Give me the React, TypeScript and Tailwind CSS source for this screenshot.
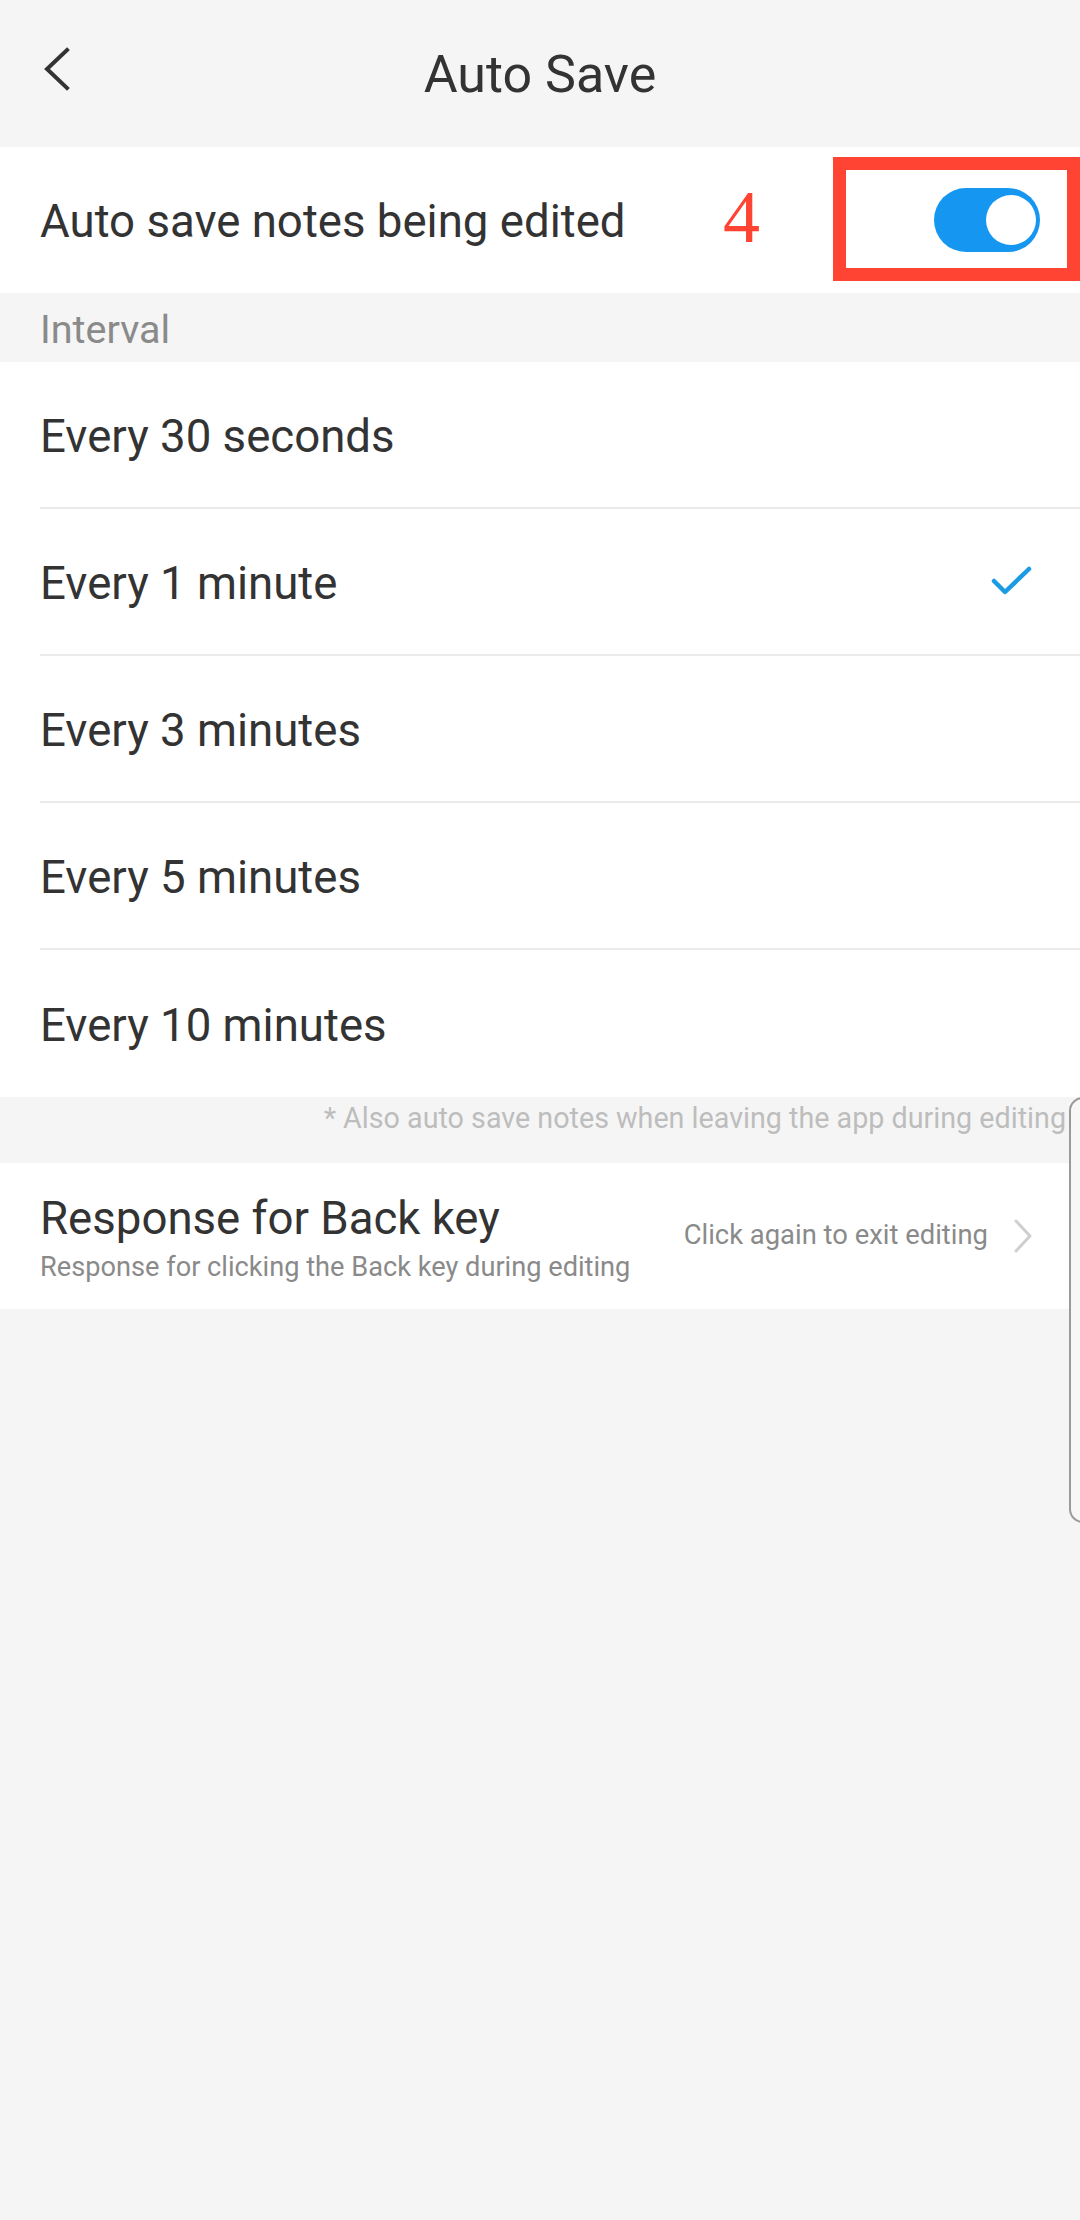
import { useState } from "react";

const intervals = ["Every 30 seconds", "Every 1 minute", "Every 3 minutes", "Every 5 minutes", "Every 10 minutes"];

function Toggle() {
  return (
    <div className="w-[106px] h-[64px] rounded-full bg-[#1597f1] flex items-center justify-end pr-[4px]">
      <div className="w-[50px] h-[50px] rounded-full bg-white" />
    </div>
  );
}

export default function App() {
  const [selected] = useState(1);

  return (
    <div className="w-[1080px] min-h-[2220px] bg-[#f5f5f5] font-['Roboto',sans-serif] text-[#333] relative overflow-hidden">
      {/* header */}
      <div className="h-[147px] relative flex items-center justify-center">
        <svg className="absolute left-[42px] top-[47px]" width="30" height="44" viewBox="0 0 30 44" fill="none">
          <path d="M25 3 L5 22 L25 41" stroke="#333" strokeWidth="4" strokeLinecap="square" strokeLinejoin="miter" />
        </svg>
        <span className="text-[52px] text-[#333] mt-[3px]">Auto Save</span>
      </div>

      {/* auto save switch */}
      <div className="h-[146px] bg-white relative flex items-center pl-[40px] pr-[40px]">
        <span className="text-[45.6px] mt-[5px]">Auto save notes being edited</span>
        <span className="absolute left-[723px] top-[33px] font-['Liberation_Serif',serif] text-[74px] leading-none text-[#ff4433]">
          4
        </span>
        <div className="ml-auto">
          <Toggle />
        </div>
        <div className="absolute left-[833px] top-[10px] w-[247px] h-[124px] border-[13px] border-[#ff4433]" />
      </div>

      {/* interval label */}
      <div className="h-[69px] flex items-center pl-[40px]">
        <span className="text-[39.5px] text-[#8a8a8a] mt-[4px]">Interval</span>
      </div>

      <div className="bg-white">
        {intervals.map((label, i) => (
          <div key={label} className="h-[147px] pl-[40px] flex flex-col">
            <div className="flex-1 flex items-center pr-[45px]">
              <span className="text-[45.6px] mt-[5px]">{label}</span>
              {i === selected && (
                <svg className="ml-auto" width="44" height="32" viewBox="0 0 44 32" fill="none">
                  <path d="M3 15 L14 26 L38 3" stroke="#1a9be3" strokeWidth="4.5" strokeLinecap="round" strokeLinejoin="round" />
                </svg>
              )}
            </div>
            {i < intervals.length - 1 && <div className="h-[2px] bg-[#ebebeb]" />}
          </div>
        ))}
      </div>

      {/* footnote */}
      <div className="h-[66px] flex justify-end pr-[14px]">
        <span className="text-[28.7px] text-[#bdbdbd]">* Also auto save notes when leaving the app during editing</span>
      </div>

      {/* back key */}
      <div className="h-[146px] bg-white flex items-center pl-[40px] pr-[46px]">
        <div className="flex flex-col mt-[5px]">
          <span className="text-[45.6px] leading-[52px] text-[#333]">Response for Back key</span>
          <span className="text-[27.2px] leading-[34px] text-[#8a8a8a] mt-[5px]">Response for clicking the Back key during editing</span>
        </div>
        <span className="ml-auto text-[27.4px] text-[#8a8a8a]">Click again to exit editing</span>
        <svg className="ml-[24px]" width="22" height="36" viewBox="0 0 22 36" fill="none">
          <path d="M4 3 L18 18 L4 33" stroke="#cfcfcf" strokeWidth="3" strokeLinecap="round" strokeLinejoin="round" />
        </svg>
      </div>

      {/* edge panel overlay */}
      <div className="absolute left-[1069px] top-[1097px] w-[30px] h-[426px] rounded-l-[14px] border-2 border-[#9a9a9a] bg-[#f7f7f7]" />
    </div>
  );
}
